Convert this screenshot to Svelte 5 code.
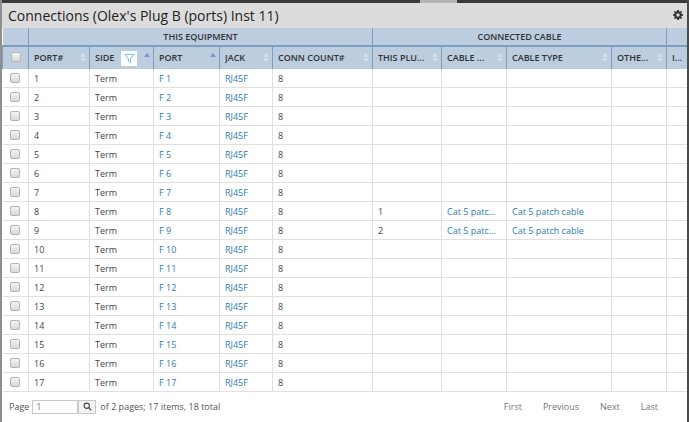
<script>
  const rows = Array.from({ length: 17 }, (_, i) => ({ n: i + 1 }))
  const cableRows = { 8: '1', 9: '2' }
  const columns = [
    { label: 'PORT#', sort: 'both' },
    { label: 'SIDE', sort: 'up', filter: true },
    { label: 'PORT', sort: 'up' },
    { label: 'JACK', sort: 'both' },
    { label: 'CONN COUNT#', sort: 'both' },
    { label: 'THIS PLU...', sort: 'both' },
    { label: 'CABLE ...', sort: 'both' },
    { label: 'CABLE TYPE', sort: 'both' },
    { label: 'OTHE...', sort: 'both' },
    { label: 'I...' }
  ]
</script>

<div class="window">
  <div class="topstrip"><span class="tab"></span></div>
  <div class="panel">
    <div class="title">
      <h1>Connections (Olex's Plug B (ports) Inst 11)</h1>
      <svg class="gear" viewBox="0 0 12 12" width="10" height="10">
        <path d="M5 0h2l.3 1.6 1.1.5L9.8 1.2l1 1-.9 1.4.5 1.1L12 5v2l-1.6.3-.5 1.1.9 1.4-1 1-1.4-.9-1.1.5L7 12H5l-.3-1.6-1.1-.5-1.4.9-1-1 .9-1.4-.5-1.1L0 7V5l1.6-.3.5-1.1-.9-1.4 1-1 1.4.9 1.1-.5z M6 4a2 2 0 1 0 0 4 2 2 0 0 0 0-4z" fill="#333" fill-rule="evenodd"/>
      </svg>
    </div>
    <table>
      <colgroup>
        <col style="width:26px" /><col style="width:61px" /><col style="width:64px" /><col style="width:66px" /><col style="width:53px" /><col style="width:100px" /><col style="width:69px" /><col style="width:65px" /><col style="width:105px" /><col style="width:55px" /><col />
      </colgroup>
      <thead>
        <tr class="groups">
          <th></th>
          <th colspan="5">THIS EQUIPMENT</th>
          <th colspan="4">CONNECTED CABLE</th>
          <th></th>
        </tr>
        <tr class="heads">
          <th class="check"><span class="box"></span></th>
          {#each columns as col}
            <th>
              <div class="head">
                <span class="label">{col.label}</span>
                {#if col.filter}
                  <span class="filter">
                    <svg viewBox="0 0 12 12" width="11" height="11"><path d="M1 1.5h10L7 6.5v4L5 9V6.5z" fill="none" stroke="#6db3de" stroke-width="1"/></svg>
                  </span>
                {/if}
                {#if col.sort === 'both'}
                  <span class="sort"><i class="up faint"></i><i class="down faint"></i></span>
                {:else if col.sort === 'up'}
                  <span class="sort single"><i class="up"></i></span>
                {/if}
              </div>
            </th>
          {/each}
        </tr>
      </thead>
      <tbody>
        {#each rows as row}
          <tr>
            <td class="check"><span class="box"></span></td>
            <td>{row.n}</td>
            <td>Term</td>
            <td><a href="#top">F {row.n}</a></td>
            <td><a href="#top">RJ45F</a></td>
            <td>8</td>
            <td>{cableRows[row.n] ?? ''}</td>
            <td>{#if cableRows[row.n]}<a href="#top">Cat 5 patc...</a>{/if}</td>
            <td>{#if cableRows[row.n]}<a href="#top">Cat 5 patch cable</a>{/if}</td>
            <td></td>
            <td></td>
          </tr>
        {/each}
      </tbody>
    </table>
    <div class="pager">
      <div class="pageinfo">
        <span>Page</span>
        <input value="1" aria-label="Page" />
        <button type="button" aria-label="Go">
          <svg viewBox="0 0 12 12" width="9" height="9"><circle cx="5" cy="5" r="3.5" fill="none" stroke="#444" stroke-width="1.4"/><path d="M7.6 7.6L11 11" stroke="#444" stroke-width="1.6"/></svg>
        </button>
        <span>of 2 pages; 17 items, 18 total</span>
      </div>
      <nav>
        <span>First</span><span>Previous</span><span>Next</span><span>Last</span>
      </nav>
    </div>
  </div>
</div>

<style>
  :global(body) {
    margin: 0;
    background: #fff;
  }

  .window {
    width: 689px;
    height: 422px;
    overflow: hidden;
    box-sizing: border-box;
    border-left: 2px solid #8f8f8f;
    border-right: 2px solid #4a4a4a;
    font-family: "Open Sans", sans-serif;
    color: #444;
    background: #fff;
  }

  .topstrip {
    height: 3px;
    background: #3a3a3a;
    position: relative;
  }

  .tab {
    position: absolute;
    left: 418px;
    top: 0;
    width: 37px;
    height: 3px;
    background: #b5b5b5;
  }

  .panel {
    width: 685px;
  }

  .title {
    height: 25px;
    background: #dcdcdc;
    display: flex;
    align-items: center;
    justify-content: space-between;
    padding: 0 4px 0 6px;
  }

  h1 {
    margin: 0;
    font-size: 14px;
    font-weight: 400;
    color: #222;
  }

  .gear {
    margin-top: -1px;
  }

  table {
    width: 685px;
    table-layout: fixed;
    border-collapse: collapse;
    font-size: 9px;
  }

  .groups th {
    height: 17px;
    padding: 0;
    background: #bccde0;
    border-left: 1px solid #7e9dbf;
    border-bottom: 2px solid #7e9dbf;
    font-size: 9px;
    font-weight: 600;
    color: #333;
    text-align: center;
  }

  .groups th:first-child {
    border-left: 0;
  }

  .heads th {
    height: 22px;
    padding: 0;
    background: #bccde0;
    border-left: 1px solid #7e9dbf;
    font-size: 9px;
    font-weight: 600;
    color: #333;
    text-align: left;
  }

  tbody td:first-child {
    border-left: 0;
  }

  .head {
    display: flex;
    align-items: center;
    height: 20px;
    padding: 0 2px 2px 5px;
  }

  .label {
    flex: 1;
    white-space: nowrap;
    overflow: hidden;
  }

  .filter {
    width: 16px;
    height: 15px;
    background: #fff;
    margin: 2px 5px 0 0;
    display: flex;
    align-items: center;
    justify-content: center;
  }

  .sort {
    width: 9px;
    display: flex;
    flex-direction: column;
    gap: 1px;
    align-items: center;
  }

  .sort.single {
    align-self: flex-start;
    margin-top: 6px;
  }

  .sort i {
    width: 0;
    height: 0;
    border-left: 3.5px solid transparent;
    border-right: 3.5px solid transparent;
  }

  .sort .up {
    border-bottom: 4px solid #7f8fd6;
  }

  .sort .down {
    border-top: 4px solid #7f8fd6;
  }

  .sort .up.faint {
    border-bottom-color: #d5dde6;
  }

  .sort .down.faint {
    border-top-color: #d5dde6;
  }

  .box {
    display: block;
    width: 8px;
    height: 8px;
    margin: 0 auto;
    background: linear-gradient(#f4f4f4, #d8d8d8);
    border: 1px solid #b4b4b4;
    border-radius: 2px;
  }

  .heads .box {
    margin-bottom: 2px;
  }

  tbody td {
    height: 18px;
    padding: 0 0 0 5px;
    border-left: 1px solid #e0e0e0;
    border-bottom: 1px solid #e0e0e0;
    white-space: nowrap;
    overflow: hidden;
    color: #444;
  }

  tbody td.check {
    padding: 0;
  }

  a {
    color: #2b7cb0;
    text-decoration: none;
  }

  .pager {
    display: flex;
    justify-content: space-between;
    align-items: center;
    height: 29px;
    font-size: 9px;
    color: #555;
    padding: 0 29px 0 7px;
  }

  .pageinfo {
    display: flex;
    align-items: center;
  }

  input {
    width: 41px;
    height: 12px;
    margin-left: 3px;
    padding: 0 0 0 3px;
    border: 1px solid #c8c8c8;
    font: inherit;
    color: #777;
    box-sizing: content-box;
  }

  button {
    width: 18px;
    height: 14px;
    padding: 0;
    margin-right: 4px;
    border: 1px solid #c8c8c8;
    background: #f4f4f4;
    display: flex;
    align-items: center;
    justify-content: center;
  }

  nav {
    display: flex;
    gap: 21px;
    color: #777;
  }
</style>
